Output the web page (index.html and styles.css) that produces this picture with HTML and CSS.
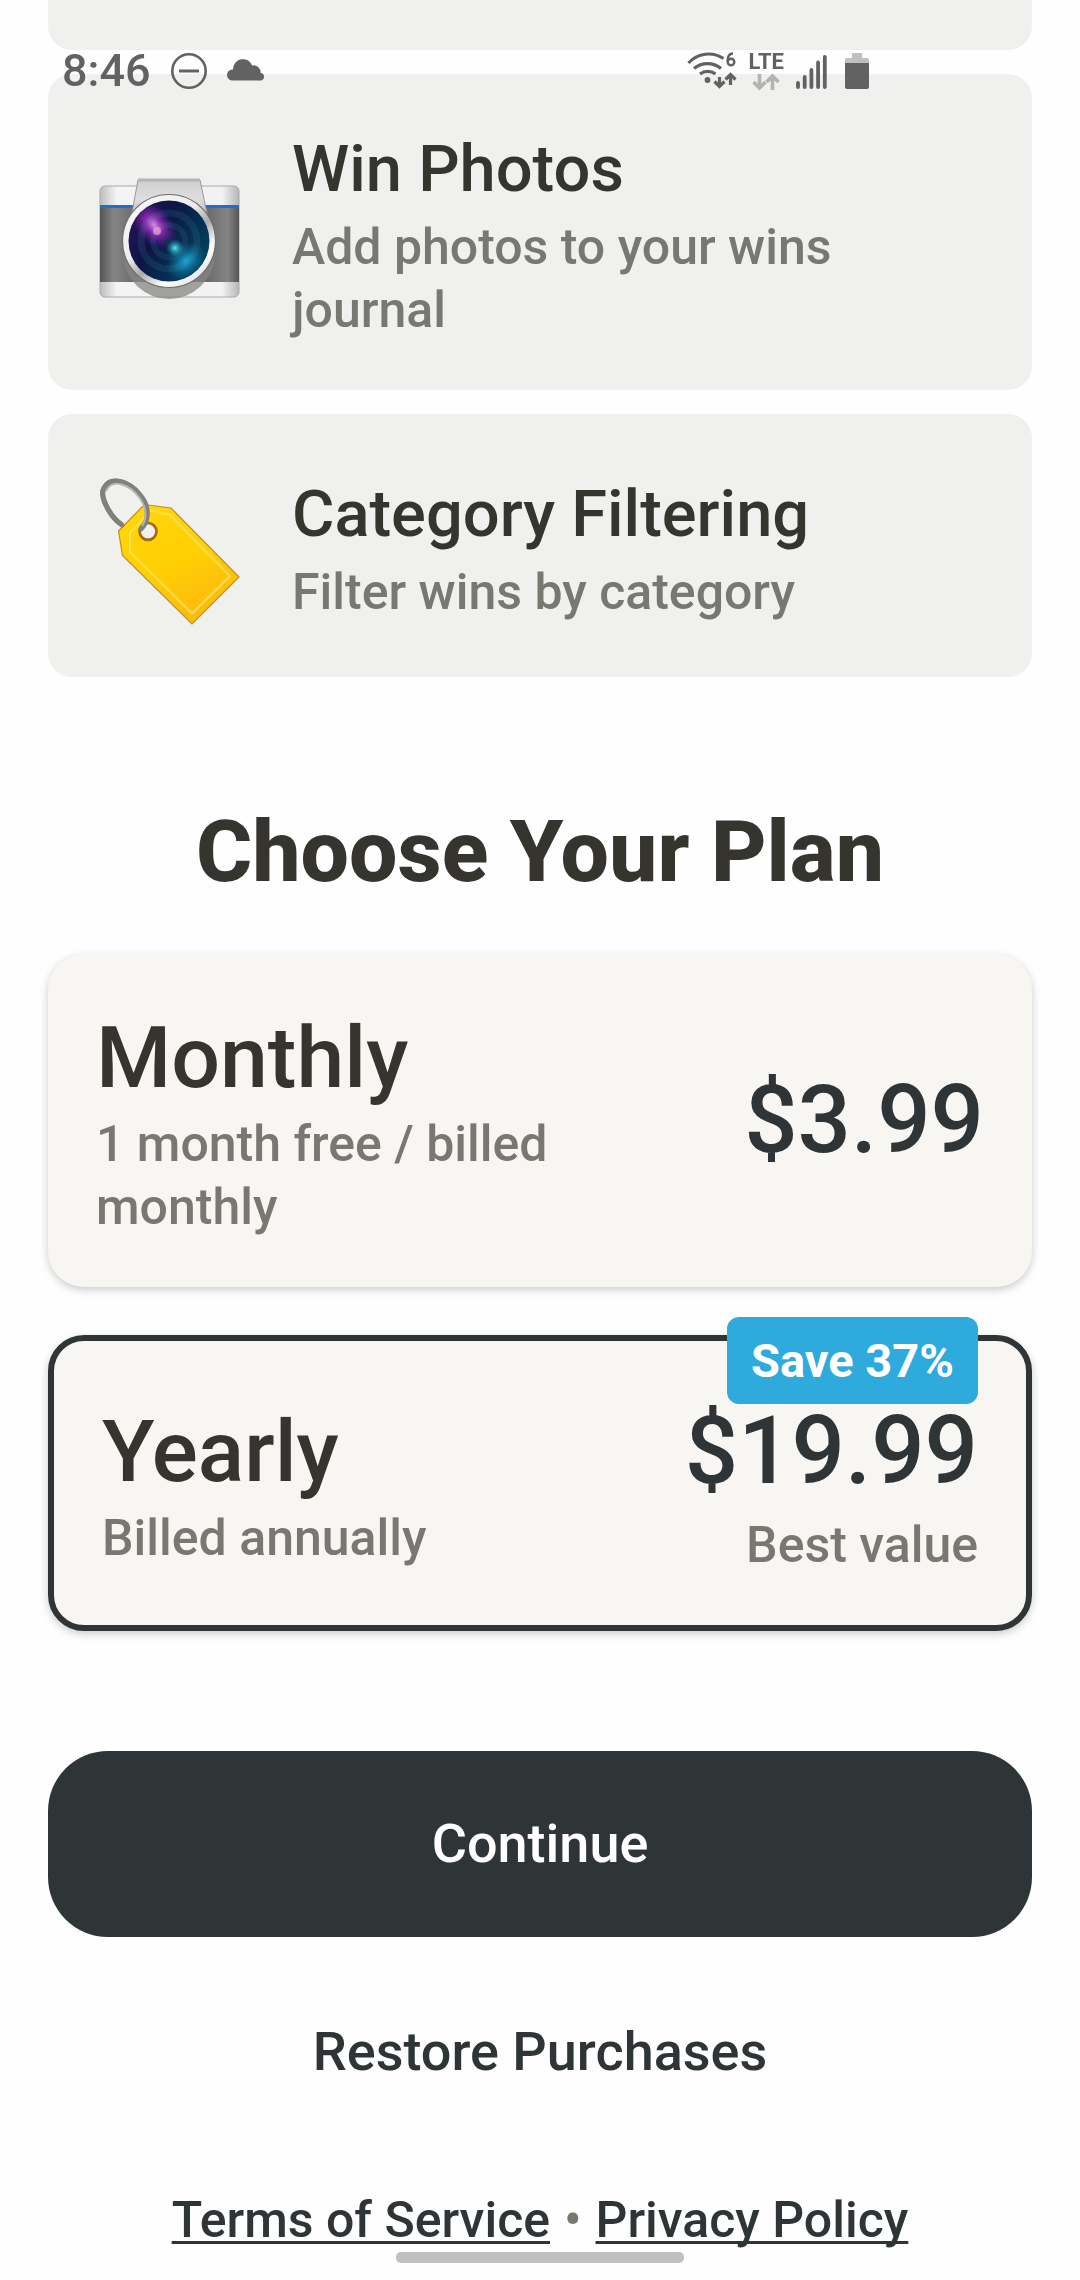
FILE: index.html
```html
<!DOCTYPE html>
<html lang="en">
<head>
<meta charset="utf-8">
<meta name="viewport" content="width=device-width, initial-scale=1">
<title>Choose Your Plan</title>
<link rel="stylesheet" href="styles.css">
</head>
<body>
<header class="status">
  <div class="status-group">
    <span class="clock">8:46</span>
    <svg class="status-icon" width="36" height="36" viewBox="0 0 36 36" aria-hidden="true"><circle cx="18" cy="18" r="16.7" fill="none" stroke="currentColor" stroke-width="2.6"/><path d="M8 18h20" stroke="currentColor" stroke-width="3"/></svg>
    <svg class="status-icon" width="39" height="36" viewBox="0 0 39 36" aria-hidden="true"><path d="M5.5 27.500a5.500 5.500 0 0 1 0-11h.5a10 10 0 0 1 19.300-4a7 7 0 0 1 8.400 7.500a3.800 3.800 0 0 1 .3 7.500z" fill="currentColor"/></svg>
  </div>
  <div class="status-group status-right">
    <svg class="status-icon" width="50" height="40" viewBox="0 0 50 40" aria-hidden="true">
      <g fill="none" stroke="currentColor" stroke-width="3.200"><path d="M1.500 12a27 27 0 0 1 35-4.500"/><path d="M7 17.500a21 21 0 0 1 27 0"/><path d="M13 23a12.500 12.500 0 0 1 15.500 0"/><path d="M32.500 26v9M27.500 30.500l5 5l5-5M43.500 34v-10M38.500 28.500l5-5l5 5"/></g>
      <circle cx="20.500" cy="29" r="2.900" fill="currentColor"/>
      <path d="M46 2.500c-4 0-5.500 4-5.500 8" fill="none" stroke="currentColor" stroke-width="2.400"/><circle cx="44" cy="11" r="3.300" fill="none" stroke="currentColor" stroke-width="2.400"/>
    </svg>
    <span class="network">
      <span class="network-label">LTE</span>
      <svg width="28" height="18" viewBox="0 0 28 18" aria-hidden="true"><path d="M7.500 1v13M1.500 9l6 6l6-6M20.500 17v-13M14.500 9l6-6l6 6" fill="none" stroke="#b3b3b2" stroke-width="3.600"/></svg>
    </span>
    <svg class="status-icon" width="31" height="36" viewBox="0 0 31 36" aria-hidden="true"><path d="M2 30v4M8.700 24v10M15.400 17v17M22.100 9.500v24.500M28.800 4v30" stroke="currentColor" stroke-width="3.800" stroke-linecap="round"/></svg>
    <svg class="status-icon battery" width="24" height="36" viewBox="0 0 24 36" aria-hidden="true"><path d="M7 0h10v5h5a2 2 0 0 1 2 2v4H0v-4a2 2 0 0 1 2-2h5z" fill="#c0c0bf"/><path d="M0 10h24v24a2 2 0 0 1-2 2H2a2 2 0 0 1-2-2z" fill="currentColor"/></svg>
  </div>
</header>

<main class="screen">
  <section class="features">
    <div class="feature feature-scrolled"></div>
    <article class="feature">
      <svg class="feature-icon" width="148" height="167" viewBox="0 0 148 167" role="img" aria-label="Camera">
        <defs>
          <linearGradient id="shell"><stop offset="0" stop-color="#bdbdbd"/><stop offset=".12" stop-color="#f4f4f4"/><stop offset=".88" stop-color="#f2f2f2"/><stop offset="1" stop-color="#b5b5b5"/></linearGradient>
          <linearGradient id="grip"><stop offset="0" stop-color="#555"/><stop offset=".1" stop-color="#858585"/><stop offset=".25" stop-color="#6c6c6c"/><stop offset=".75" stop-color="#686868"/><stop offset=".92" stop-color="#858585"/><stop offset="1" stop-color="#555"/></linearGradient>
          <linearGradient id="hump" x2="0" y2="1"><stop offset="0" stop-color="#cfcfcf"/><stop offset=".5" stop-color="#dedede"/><stop offset="1" stop-color="#b5b5b5"/></linearGradient>
          <linearGradient id="ring" x2=".8" y2="1"><stop offset="0" stop-color="#f8f8f8"/><stop offset=".45" stop-color="#eee"/><stop offset=".62" stop-color="#aaa"/><stop offset=".8" stop-color="#fff"/><stop offset="1" stop-color="#ddd"/></linearGradient>
          <linearGradient id="glass" x2="1" y2=".6"><stop offset="0" stop-color="#32105e"/><stop offset=".45" stop-color="#0b1645"/><stop offset="1" stop-color="#03405c"/></linearGradient>
          <radialGradient id="violet"><stop offset="0" stop-color="#d68bdc"/><stop offset=".35" stop-color="#8f2cb4"/><stop offset="1" stop-color="#5a1690" stop-opacity="0"/></radialGradient>
          <radialGradient id="cyan"><stop offset="0" stop-color="#19a7d4"/><stop offset="1" stop-color="#0784b0" stop-opacity="0"/></radialGradient>
          <radialGradient id="spark"><stop offset="0" stop-color="#52f0ef"/><stop offset="1" stop-color="#14a6c0" stop-opacity="0"/></radialGradient>
          <clipPath id="lens"><circle cx="73" cy="92" r="40"/></clipPath>
          <clipPath id="case"><rect x="4" y="37" width="139" height="111" rx="5"/></clipPath>
        </defs>
        <rect x="4" y="37" width="139" height="111" rx="5" fill="url(#shell)" stroke="#aaa" stroke-width="1"/>
        <g clip-path="url(#case)">
          <path d="M4 58h139v75H4z" fill="url(#grip)"/><path d="M4 56h139v3H4z" fill="#1f6fd0"/>
        </g>
        <path d="M27 105a47 47 0 0 0 14 32q14 13 32 13t32-13a47 47 0 0 0 14-32z" fill="#858783" opacity=".75"/>
        <path d="M42 31h62l8 38H35z" fill="url(#hump)" stroke="#999" stroke-width="1"/>
        <path d="M42 31h62" stroke="#b4b4b4" stroke-width="3"/>
        <circle cx="73" cy="92" r="46.500" fill="url(#ring)" stroke="#6d6d6d" stroke-width="1.200"/>
        <circle cx="73" cy="92" r="40.500" fill="url(#glass)"/>
        <g clip-path="url(#lens)">
          <ellipse cx="58" cy="76" rx="18" ry="28" transform="rotate(-42 58 76)" fill="url(#violet)"/>
          <ellipse cx="90" cy="112" rx="22" ry="16" transform="rotate(-40 90 112)" fill="url(#cyan)"/>
          <circle cx="73" cy="92" r="28" fill="none" stroke="#4c9bb0" stroke-opacity=".14" stroke-width="7"/>
          <circle cx="73" cy="92" r="16" fill="none" stroke="#57a8bd" stroke-opacity=".12" stroke-width="6"/>
          <circle cx="79" cy="99" r="9" fill="url(#spark)"/><circle cx="61" cy="82" r="4" fill="#e6aad8" opacity=".7"/>
          <circle cx="72" cy="92" r="2.500" fill="#063b42"/>
        </g>
      </svg>
      <div class="feature-text">
        <h3 class="feature-title">Win Photos</h3>
        <p class="note">Add photos to your wins journal</p>
      </div>
    </article>
    <article class="feature">
      <svg class="feature-icon" width="148" height="167" viewBox="0 0 148 167" role="img" aria-label="Label">
        <defs>
          <linearGradient id="tag" x1=".2" x2=".7" y2="1"><stop offset="0" stop-color="#ffd60a"/><stop offset=".5" stop-color="#ffcf03"/><stop offset="1" stop-color="#fbb612"/></linearGradient>
          <linearGradient id="tagedge" x2="1" y2="1"><stop offset="0" stop-color="#ffe04a"/><stop offset="1" stop-color="#ffdc55"/></linearGradient>
        </defs>
        <path d="M26 63C14 55 3 34 8 26C15 13 34 20 44 33" fill="none" stroke="#858785" stroke-width="5"/>
        <path fill-rule="evenodd" d="M22.500 69L46 45q2-2 6-2l23 3l68 69L96 162L26.500 93.500zM52 61.500a7.800 7.800 0 1 0 .1 0z" fill="url(#tag)" stroke="#c1901b" stroke-width="1.200"/>
        <path d="M34 71L53 50q2-2 5-1l16 4L134 114L96 151.500L34 90z" fill="none" stroke="url(#tagedge)" stroke-width="2"/>
        <circle cx="52" cy="69.500" r="8.500" fill="none" stroke="#a86815" stroke-width="2.600"/>
        <path d="M26 63C14 55 3 34 8 26C15 13 34 20 44 33C53 43 54 58 45 67" fill="none" stroke="#7f817f" stroke-width="5" stroke-linecap="round"/>
        <path d="M10 29C16 16 33 22 43 35C50 44 52 55 46 64" fill="none" stroke="#b3b5b3" stroke-width="1.800"/>
      </svg>
      <div class="feature-text">
        <h3 class="feature-title">Category Filtering</h3>
        <p class="note">Filter wins by category</p>
      </div>
    </article>
  </section>

  <form class="plans">
    <h2 class="plans-title">Choose Your Plan</h2>
    <label class="plan">
      <input class="plan-input" type="radio" name="plan" value="monthly">
      <span class="plan-info"><span class="plan-name">Monthly</span><span class="note">1 month free / billed monthly</span></span>
      <span class="plan-cost"><span class="price">$3.99</span></span>
    </label>
    <label class="plan plan-selected">
      <input class="plan-input" type="radio" name="plan" value="yearly" checked>
      <span class="plan-info"><span class="plan-name">Yearly</span><span class="note">Billed annually</span></span>
      <span class="plan-cost"><span class="price">$19.99</span><span class="note">Best value</span></span>
      <span class="badge">Save 37%</span>
    </label>
    <button class="continue" type="submit">Continue</button>
    <button class="restore" type="button">Restore Purchases</button>
  </form>

  <footer class="legal"><a href="#terms">Terms of Service</a><span class="dot">•</span><a href="#privacy">Privacy Policy</a></footer>
</main>
<div class="home-bar"></div>
</body>
</html>
```
FILE: styles.css
```css
* {
  box-sizing: border-box;
}

body {
  margin: 0;
  background: #fefefe;
  color: #36342e;
  font-family: Roboto, "Liberation Sans", sans-serif;
  font-weight: 500;
}

h2, h3, p {
  margin: 0;
}

.status {
  position: fixed;
  z-index: 2;
  top: 0;
  left: 0;
  right: 0;
  display: flex;
  justify-content: space-between;
  padding: 48px 211px 0 62px;
  color: #626262;
}

.status-group {
  display: flex;
  align-items: center;
  gap: 20px;
  height: 46px;
}

.status-right {
  gap: 12px;
}

.battery {
  margin-left: 6px;
}

.clock {
  font-size: 45px;
  line-height: 46px;
}

.network {
  display: flex;
  flex-direction: column;
  align-items: center;
}

.network-label {
  font-size: 22px;
  line-height: 22px;
  font-weight: 700;
}

.screen {
  padding: 0 48px;
}

.features {
  display: grid;
  gap: 24px;
}

.feature {
  display: flex;
  align-items: center;
  gap: 48px;
  padding: 48px;
  background: #f0f0ee;
  border-radius: 24px;
}

.feature-scrolled {
  height: 50px;
  padding: 0;
  border-radius: 0 0 24px 24px;
}

.feature-icon {
  flex: none;
}

.feature-text {
  flex: 1;
}

.feature-title {
  font-size: 65px;
  line-height: 94px;
  font-weight: 500;
}

.note {
  color: #797771;
  font-size: 50px;
  line-height: 63px;
}

.plans {
  display: flex;
  flex-direction: column;
  gap: 48px;
  padding-top: 120px;
}

.plans-title {
  font-size: 86px;
  line-height: 109px;
  font-weight: 800;
  text-align: center;
}

.plan {
  position: relative;
  display: flex;
  align-items: center;
  justify-content: space-between;
  gap: 48px;
  padding: 48px;
  background: #f7f6f2;
  border-radius: 36px;
  box-shadow: 0 3px 8px rgba(0, 0, 0, 0.2);
}

.plan-selected {
  border: 6px solid #2f3437;
}

.plan-input {
  position: absolute;
  inset: 0;
  margin: 0;
  opacity: 0;
}

.plan-info {
  display: flex;
  flex-direction: column;
  flex: 0 1 540px;
}

.plan-name {
  font-size: 86px;
  line-height: 111px;
}

.plan-cost {
  display: flex;
  flex-direction: column;
  align-items: flex-end;
}

.price {
  color: #2f3437;
  font-size: 94px;
  line-height: 125px;
}

.badge {
  position: absolute;
  top: -24px;
  right: 48px;
  padding: 12px 24px;
  background: #2eaadc;
  border-radius: 12px;
  color: #fff;
  font-size: 47px;
  line-height: 63px;
  font-weight: 700;
}

.continue,
.restore {
  border: 0;
  font: inherit;
  font-size: 54px;
  line-height: 78px;
}

.continue {
  margin-top: 72px;
  padding: 54px;
  background: #2f3437;
  border-radius: 60px;
  color: #fefefe;
}

.restore {
  padding: 28px;
  background: none;
  color: #2f3437;
}

.legal {
  display: flex;
  justify-content: center;
  gap: 14px;
  padding: 70px 0 28px;
  font-size: 50px;
  line-height: 63px;
}

.legal a {
  color: #2f3437;
  text-decoration-thickness: 3px;
  text-underline-offset: 4px;
  text-decoration-skip-ink: none;
}

.dot {
  color: #797771;
}

.home-bar {
  position: fixed;
  bottom: 17px;
  left: 50%;
  width: 288px;
  height: 11px;
  margin-left: -144px;
  border-radius: 5px;
  background: #c0c0c0;
}
```
